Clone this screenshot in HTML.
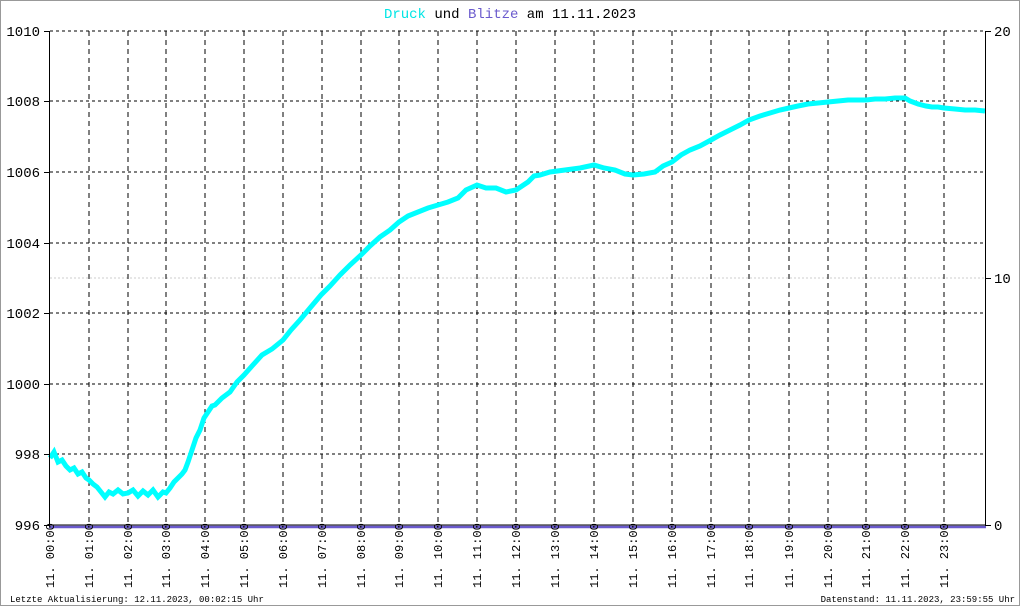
<!DOCTYPE html>
<html><head><meta charset="utf-8"><style>
html,body{margin:0;padding:0;background:#fff}
svg{display:block}
text{font-family:"Liberation Mono","DejaVu Sans Mono",monospace}
</style></head><body>
<svg width="1020" height="606" viewBox="0 0 1020 606" xmlns="http://www.w3.org/2000/svg">
<rect x="0.5" y="0.5" width="1019" height="605" fill="#fff" stroke="#999"/>
<text x="510" y="18" font-size="14" text-anchor="middle"><tspan fill="#00e5e5">Druck</tspan><tspan fill="#000"> und </tspan><tspan fill="#6a5acd">Blitze</tspan><tspan fill="#000"> am 11.11.2023</tspan></text>
<g stroke="#000" stroke-dasharray="3,3" stroke-width="1">
<line x1="50" y1="31" x2="985" y2="31"/><line x1="50" y1="101" x2="985" y2="101"/><line x1="50" y1="172" x2="985" y2="172"/><line x1="50" y1="243" x2="985" y2="243"/><line x1="50" y1="313" x2="985" y2="313"/><line x1="50" y1="384" x2="985" y2="384"/><line x1="50" y1="454" x2="985" y2="454"/>
</g>
<line x1="50" y1="278" x2="985" y2="278" stroke="#ccc" stroke-dasharray="2,2"/>
<g stroke="#000" stroke-dasharray="5,4" stroke-width="1">
<line x1="89" y1="31" x2="89" y2="525"/><line x1="128" y1="31" x2="128" y2="525"/><line x1="166" y1="31" x2="166" y2="525"/><line x1="205" y1="31" x2="205" y2="525"/><line x1="244" y1="31" x2="244" y2="525"/><line x1="283" y1="31" x2="283" y2="525"/><line x1="322" y1="31" x2="322" y2="525"/><line x1="361" y1="31" x2="361" y2="525"/><line x1="399" y1="31" x2="399" y2="525"/><line x1="438" y1="31" x2="438" y2="525"/><line x1="477" y1="31" x2="477" y2="525"/><line x1="516" y1="31" x2="516" y2="525"/><line x1="555" y1="31" x2="555" y2="525"/><line x1="594" y1="31" x2="594" y2="525"/><line x1="633" y1="31" x2="633" y2="525"/><line x1="672" y1="31" x2="672" y2="525"/><line x1="711" y1="31" x2="711" y2="525"/><line x1="749" y1="31" x2="749" y2="525"/><line x1="789" y1="31" x2="789" y2="525"/><line x1="828" y1="31" x2="828" y2="525"/><line x1="866" y1="31" x2="866" y2="525"/><line x1="905" y1="31" x2="905" y2="525"/><line x1="944" y1="31" x2="944" y2="525"/>
</g>
<polyline fill="none" stroke="#00ffff" stroke-width="5" stroke-linejoin="miter" points="50,458 54,452 58,462 62,460 66,466 70,470 74,468 78,474 82,472 86,478 89,480 93,484 97,487 101,492 105,497 109,492 113,494 118,490 123,494 128,493 133,490 138,496 143,491 148,495 153,490 158,497 163,492 166,493 170,488 174,482 178,478 182,474 185,470 188,462 192,450 196,438 200,430 204,418 208,412 212,406 215,405 222,398 230,392 237,382 244,375 252,366 262,355 272,349 283,340 291,330 300,320 310,308 321,295 330,286 340,275 350,265 361,255 370,246 380,237 390,230 399,222 408,216 418,212 428,208 438,205 448,202 458,198 466,190 477,185 486,188 496,188 506,192 516,190 522,186 528,182 534,176 540,175 550,172 565,170 580,168 594,165 604,168 615,170 625,174 633,175 644,174 655,172 663,166 672,162 681,155 690,150 700,146 711,140 720,135 730,130 740,125 749,120 760,116 770,113 780,110 789,108 798,106 808,104 818,103 828,102 838,101 848,100 858,100 866,100 875,99 885,99 895,98 905,98 910,101 918,104 926,106 932,107 938,107 944,108 955,109 965,110 975,110 985,111"/>
<line x1="49.5" y1="31" x2="49.5" y2="526" stroke="#000"/>
<line x1="985.5" y1="31" x2="985.5" y2="526" stroke="#000"/>
<line x1="49" y1="525" x2="986" y2="525" stroke="#000" stroke-width="1"/>
<line x1="49" y1="527" x2="986" y2="527" stroke="#6a5acd" stroke-width="2.5"/>
<g stroke="#000"><line x1="44" y1="31.5" x2="50" y2="31.5"/><line x1="44" y1="101.5" x2="50" y2="101.5"/><line x1="44" y1="172.5" x2="50" y2="172.5"/><line x1="44" y1="243.5" x2="50" y2="243.5"/><line x1="44" y1="313.5" x2="50" y2="313.5"/><line x1="44" y1="384.5" x2="50" y2="384.5"/><line x1="44" y1="454.5" x2="50" y2="454.5"/><line x1="44" y1="525.5" x2="50" y2="525.5"/>
<line x1="985" y1="31.5" x2="991" y2="31.5"/><line x1="985" y1="278.5" x2="991" y2="278.5"/><line x1="985" y1="525.5" x2="991" y2="525.5"/></g>
<g font-size="14" text-anchor="end" fill="#000">
<text x="40" y="36">1010</text><text x="40" y="106">1008</text><text x="40" y="177">1006</text><text x="40" y="248">1004</text><text x="40" y="318">1002</text><text x="40" y="389">1000</text><text x="40" y="459">998</text><text x="40" y="530">996</text>
</g>
<g font-size="14" fill="#000"><text x="994" y="36">20</text><text x="994" y="283">10</text><text x="994" y="530">0</text></g>
<g font-size="12" fill="#000">
<text transform="translate(54,588) rotate(-90)">11. 00:00</text>
<text transform="translate(93,588) rotate(-90)">11. 01:00</text>
<text transform="translate(132,588) rotate(-90)">11. 02:00</text>
<text transform="translate(170,588) rotate(-90)">11. 03:00</text>
<text transform="translate(209,588) rotate(-90)">11. 04:00</text>
<text transform="translate(248,588) rotate(-90)">11. 05:00</text>
<text transform="translate(287,588) rotate(-90)">11. 06:00</text>
<text transform="translate(326,588) rotate(-90)">11. 07:00</text>
<text transform="translate(365,588) rotate(-90)">11. 08:00</text>
<text transform="translate(403,588) rotate(-90)">11. 09:00</text>
<text transform="translate(442,588) rotate(-90)">11. 10:00</text>
<text transform="translate(481,588) rotate(-90)">11. 11:00</text>
<text transform="translate(520,588) rotate(-90)">11. 12:00</text>
<text transform="translate(559,588) rotate(-90)">11. 13:00</text>
<text transform="translate(598,588) rotate(-90)">11. 14:00</text>
<text transform="translate(637,588) rotate(-90)">11. 15:00</text>
<text transform="translate(676,588) rotate(-90)">11. 16:00</text>
<text transform="translate(715,588) rotate(-90)">11. 17:00</text>
<text transform="translate(753,588) rotate(-90)">11. 18:00</text>
<text transform="translate(793,588) rotate(-90)">11. 19:00</text>
<text transform="translate(832,588) rotate(-90)">11. 20:00</text>
<text transform="translate(870,588) rotate(-90)">11. 21:00</text>
<text transform="translate(909,588) rotate(-90)">11. 22:00</text>
<text transform="translate(948,588) rotate(-90)">11. 23:00</text>
</g>
<text x="10" y="602" font-size="9" fill="#000">Letzte Aktualisierung: 12.11.2023, 00:02:15 Uhr</text>
<text x="1015" y="602" font-size="9" fill="#000" text-anchor="end">Datenstand: 11.11.2023, 23:59:55 Uhr</text>
</svg>
</body></html>
